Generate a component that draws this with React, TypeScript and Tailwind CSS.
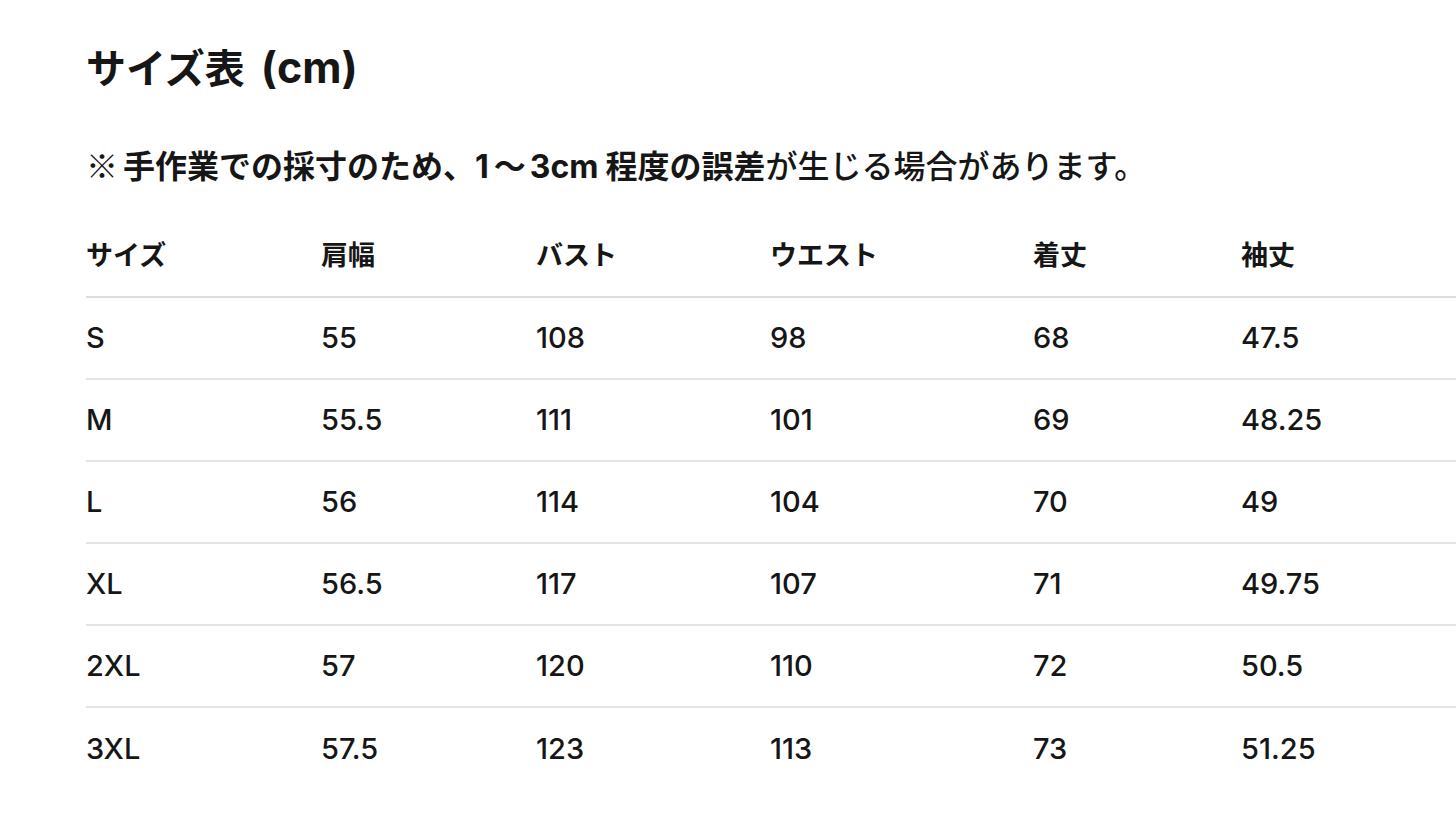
import React from "react";

const cols = ["サイズ", "肩幅", "バスト", "ウエスト", "着丈", "袖丈"];
const rows = [
  ["S", "55", "108", "98", "68", "47.5"],
  ["M", "55.5", "111", "101", "69", "48.25"],
  ["L", "56", "114", "104", "70", "49"],
  ["XL", "56.5", "117", "107", "71", "49.75"],
  ["2XL", "57", "120", "110", "72", "50.5"],
  ["3XL", "57.5", "123", "113", "73", "51.25"],
];

export default function App() {
  return (
    <div
      className="w-[1456px] h-[836px] overflow-hidden bg-white text-[#161616] pl-[86px]"
      style={{ fontFamily: 'Inter, "Noto Sans CJK JP", sans-serif' }}
    >
      <h1 className="pt-[40px] h-[104px] text-[40px] font-bold leading-[54px]">
        サイズ表<span className="ml-[16px] text-[43px]">(cm)</span>
      </h1>
      <p className="h-[112px] pt-[38px] text-[32px] font-bold leading-[44px]">
        <span className="mr-[5px]" style={{ fontFamily: '"Noto Sans CJK JP", sans-serif' }}>※</span>手作業での採寸のため、<span className="mr-[5px]">1</span><span className="mr-[4px]">〜</span><span className="mr-[7px]">3cm</span>程度の誤差<span className="font-medium">が生じる場合があります。</span>
      </p>
      <div className="w-[1450px]">
        <div className="grid grid-cols-[235px_215px_234px_263px_208px_295px] h-[82px] items-center border-b-2 border-[#dddddd] text-[27px] font-bold">
          {cols.map((c) => (
            <div key={c}>{c}</div>
          ))}
        </div>
        {rows.map((r, i) => (
          <div
            key={r[0]}
            className={`grid grid-cols-[235px_215px_234px_263px_208px_295px] h-[82px] items-center text-[29px] font-medium ${
              i < rows.length - 1 ? "border-b-2 border-[#e4e4e4]" : ""
            }`}
          >
            {r.map((v, j) => (
              <div key={j}>{v}</div>
            ))}
          </div>
        ))}
      </div>
    </div>
  );
}
